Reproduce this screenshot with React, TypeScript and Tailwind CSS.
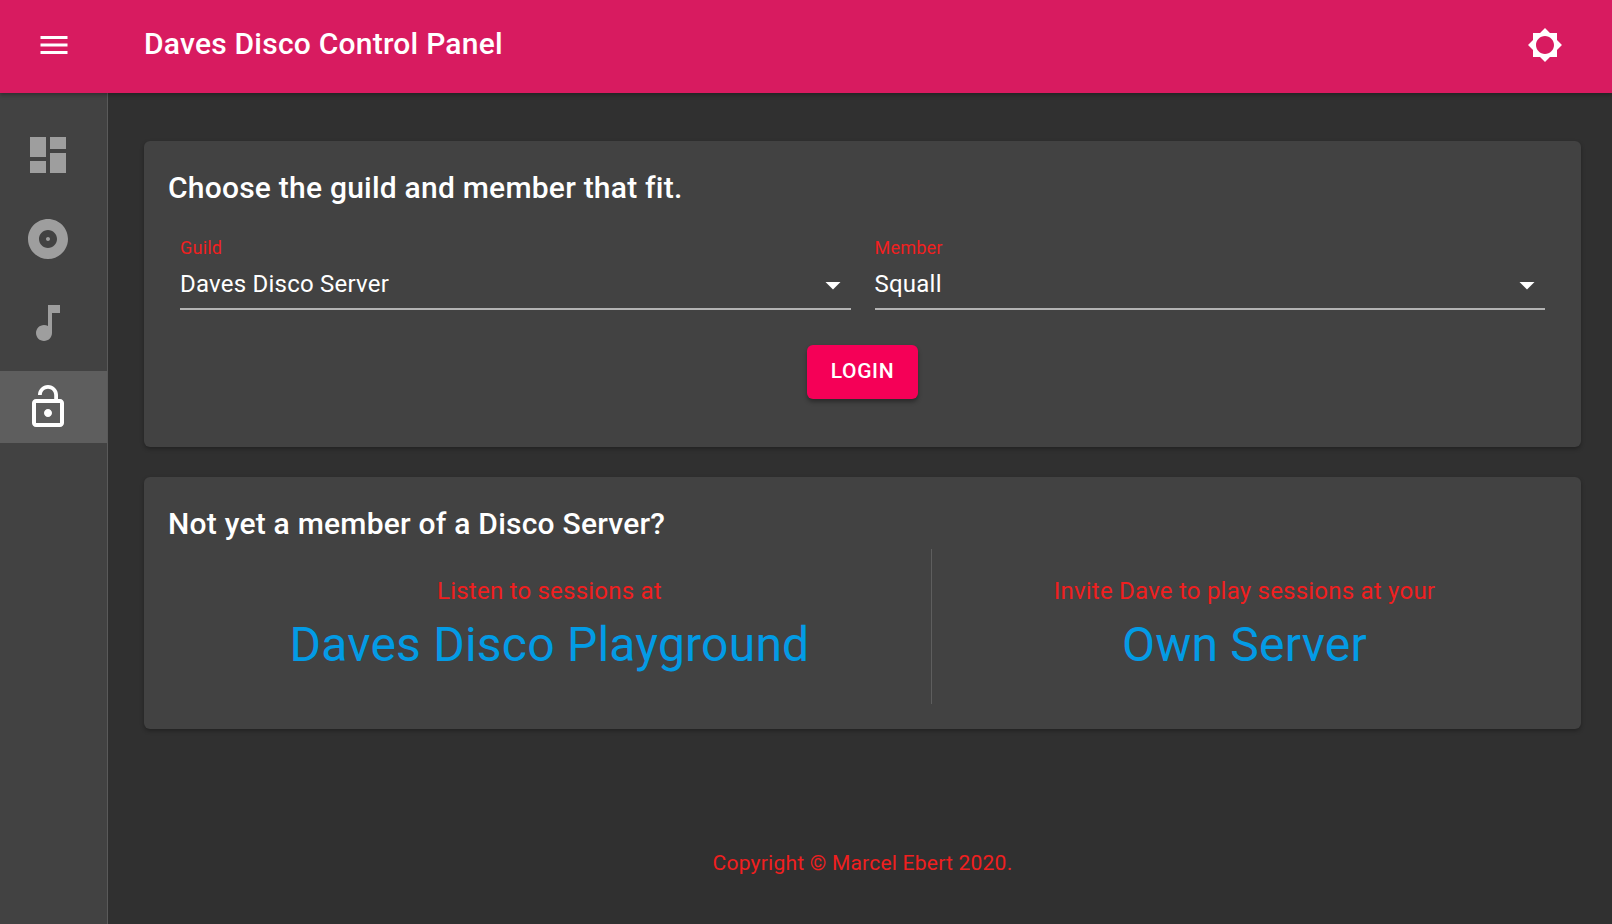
import { useState } from 'react';

const navItems = [
  { id: 'dashboard', path: 'M3 13h8V3H3v10zm0 8h8v-6H3v6zm10 0h8V11h-8v10zm0-18v6h8V3h-8z' },
  { id: 'disc', path: 'M12 2C6.48 2 2 6.48 2 12s4.48 10 10 10 10-4.48 10-10S17.52 2 12 2zm0 14.5c-2.49 0-4.5-2.01-4.5-4.5S9.51 7.5 12 7.5s4.5 2.01 4.5 4.5-2.01 4.5-4.5 4.5zm0-5.5c-.55 0-1 .45-1 1s.45 1 1 1 1-.45 1-1-.45-1-1-1z' },
  { id: 'music', path: 'M12 3v10.55c-.59-.34-1.27-.55-2-.55-2.21 0-4 1.79-4 4s1.79 4 4 4 4-1.79 4-4V7h4V3h-6z' },
  { id: 'lock', path: 'M12 17c1.1 0 2-.9 2-2s-.9-2-2-2-2 .9-2 2 .9 2 2 2zm6-9h-1V6c0-2.76-2.24-5-5-5S7 3.24 7 6h1.9c0-1.71 1.39-3.1 3.1-3.1 1.71 0 3.1 1.39 3.1 3.1v2H6c-1.1 0-2 .9-2 2v10c0 1.1.9 2 2 2h12c1.1 0 2-.9 2-2V10c0-1.1-.9-2-2-2zm0 12H6V10h12v10z' },
];

function SelectField({ label, value }: { label: string; value: string }) {
  return (
    <div className="flex-1 min-w-0">
      <div className="text-[18px] leading-[20px] text-[#f01f1f]">{label}</div>
      <div className="mt-[3px] flex h-[49px] items-center justify-between border-b-2 border-[#b3b3b3] pb-[2px] text-[24px] text-white">
        <span>{value}</span>
        <svg viewBox="0 0 24 24" className="mt-[2px] h-[36px] w-[36px] fill-white">
          <path d="M7 10l5 5 5-5z" />
        </svg>
      </div>
    </div>
  );
}

export default function App() {
  const [active] = useState('lock');

  return (
    <div className="flex h-[924px] flex-col overflow-hidden bg-[#303030] font-['Roboto',sans-serif] tracking-[0.225px]">
      <header className="z-10 flex h-[93px] shrink-0 items-center bg-[#d81b60] pb-[4px] pl-[36px] pr-[49px] shadow-[0_2px_4px_rgba(0,0,0,0.3)]">
        <svg viewBox="0 0 24 24" className="h-[36px] w-[36px] fill-white">
          <path d="M3 18h18v-2H3v2zm0-5h18v-2H3v2zm0-7v2h18V6H3z" />
        </svg>
        <h1 className="ml-[72px] flex-1 -translate-y-px text-[30px] font-medium leading-none text-white">Daves Disco Control Panel</h1>
        <svg viewBox="0 0 24 24" className="h-[36px] w-[36px] fill-white">
          <path d="M20 8.69V4h-4.69L12 .69 8.69 4H4v4.69L.69 12 4 15.31V20h4.69L12 23.31 15.31 20H20v-4.69L23.31 12 20 8.69zM12 18c-3.31 0-6-2.69-6-6s2.69-6 6-6 6 2.69 6 6-2.69 6-6 6z" />
        </svg>
      </header>

      <div className="flex min-h-0 flex-1">
        <nav className="w-[108px] shrink-0 border-r border-[#5a5a5a] bg-[#424242] pt-[20px]">
          {navItems.map((item) => (
            <div
              key={item.id}
              className={`flex h-[84px] items-center pl-[24px] last:mt-[6px] last:h-[72px] ${active === item.id ? 'bg-[#5e5e5e]' : ''}`}
            >
              <svg viewBox="0 0 24 24" className={`h-[48px] w-[48px] ${active === item.id ? 'fill-white' : 'fill-[#9e9e9e]'}`}>
                <path d={item.path} />
              </svg>
            </div>
          ))}
        </nav>

        <main className="flex min-w-0 flex-1 flex-col pl-[36px] pr-[31px] pt-[48px]">
          <section className="h-[306px] rounded-[6px] bg-[#424242] px-[24px] pt-[24px] shadow-[0_2px_4px_rgba(0,0,0,0.3)]">
            <h2 className="text-[30px] font-medium leading-[45px] text-white">Choose the guild and member that fit.</h2>
            <div className="mt-[28px] flex gap-[24px] px-[12px]">
              <SelectField label="Guild" value="Daves Disco Server" />
              <SelectField label="Member" value="Squall" />
            </div>
            <div className="mt-[35px] flex justify-center">
              <button className="h-[54px] w-[111px] rounded-[6px] bg-[#f50057] text-[21px] font-medium tracking-[0.6px] text-white shadow-[0_3px_4px_rgba(0,0,0,0.35)]">
                LOGIN
              </button>
            </div>
          </section>

          <section className="mt-[30px] h-[252px] rounded-[6px] bg-[#424242] px-[24px] pt-[24px] shadow-[0_2px_4px_rgba(0,0,0,0.3)]">
            <h2 className="text-[30px] font-medium leading-[45px] text-white">Not yet a member of a Disco Server?</h2>
            <div className="mt-[3px] flex h-[155px]">
              <div className="flex w-[55%] flex-col items-center border-r border-[#5e5e5e] pt-[26px]">
                <p className="text-[24px] leading-[32px] text-[#f01f1f]">Listen to sessions at</p>
                <a className="mt-[6px] text-[48px] leading-[64px] text-[#039be5]">Daves Disco Playground</a>
              </div>
              <div className="flex w-[45%] flex-col items-center pt-[26px]">
                <p className="text-[24px] leading-[32px] text-[#f01f1f]">Invite Dave to play sessions at your</p>
                <a className="mt-[6px] text-[48px] leading-[64px] text-[#039be5]">Own Server</a>
              </div>
            </div>
          </section>

          <footer className="mt-[120px] text-center text-[21px] leading-[28px] text-[#f01f1f]">Copyright © Marcel Ebert 2020.</footer>
        </main>
      </div>
    </div>
  );
}
